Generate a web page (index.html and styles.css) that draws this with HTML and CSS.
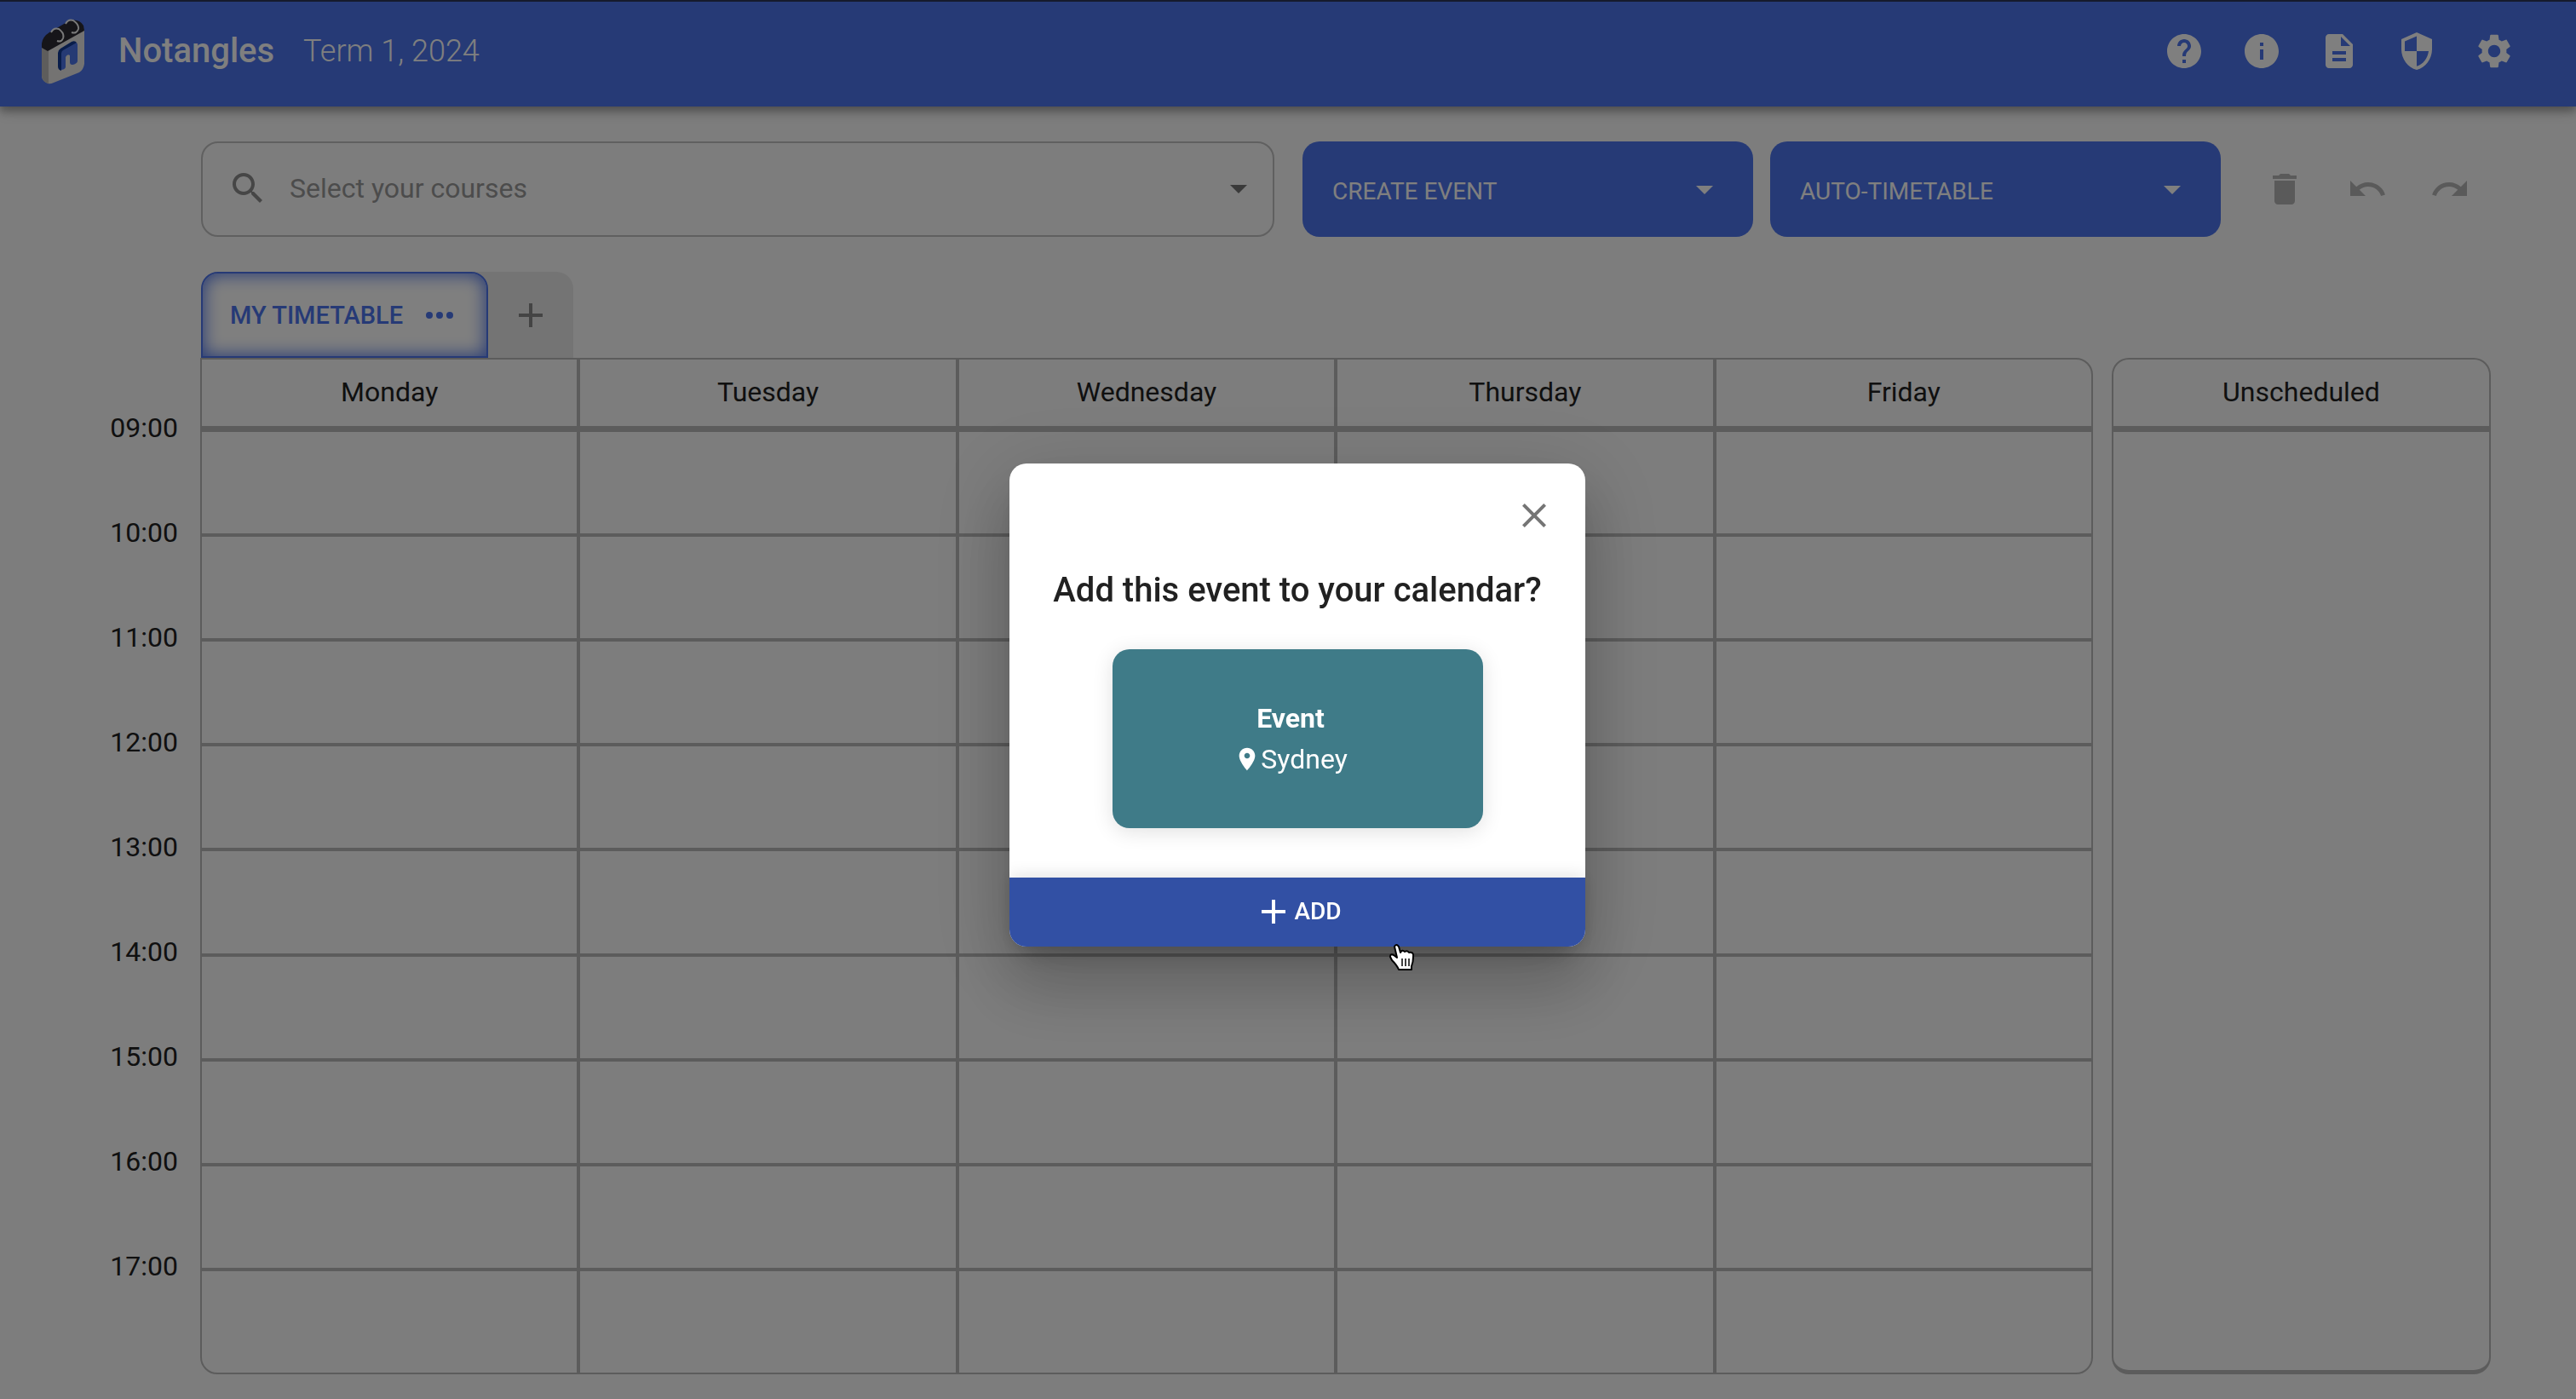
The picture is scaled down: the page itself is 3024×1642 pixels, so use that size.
FILE: index.html
```html
<!DOCTYPE html>
<html lang="en">
<head>
<meta charset="utf-8">
<title>Notangles</title>
<link rel="stylesheet" href="styles.css">
</head>
<body>
<header class="navbar">
  <a class="brand" href="#">
    <svg class="logo" viewBox="0 0 50 77" aria-hidden="true">
      <path d="M0 34 L8 37 L50 13 V53 Q49 60 44 63 L14 75 Q10 77 7 76 Q0 73 0 67Z" fill="#e8e6e4"/>
      <path d="M0 34 L8 37 V76 Q0 74 0 66Z" fill="#bdbab8"/>
      <path d="M0 34 V29 Q1 21 9 16 L33 2 Q44 0 49 8 L50 14 L7 38Z" fill="#2c2a33"/>
      <path d="M22 60 V41 Q22 38 25 36 L37 29 Q42 26 42 31 V50 Q41 53 36 54 Q33 54 33 51 V43 Q30 41 28 45 V57 Q27 60 22 60Z" fill="#4c74e8"/>
      <path d="M23 61 Q19 60 19 56 V40 Q19 37 22 35 L35 27 Q39 25 41 28 L25 37 Q23 38 23 41Z" fill="#123a94"/>
      <path d="M11 16 Q14 10 20 12 Q27 17 25 23 Q23 28 18 26 M28 6 Q31 0 37 2 Q44 7 43 12 Q41 18 35 16" fill="none" stroke="#f4f4f4" stroke-width="2"/>
    </svg>
    <span class="brand-name">Notangles</span>
  </a>
  <span class="term">Term 1, 2024</span>
  <nav class="nav-actions" aria-label="Site">
    <button class="nav-button" aria-label="Help"><svg class="icon" viewBox="0 0 24 24"><path d="M12 2C6.48 2 2 6.48 2 12s4.480 10 10 10 10-4.480 10-10S17.520 2 12 2zm1 17h-2v-2h2v2zm2.070-7.750l-.9.920C13.450 12.900 13 13.500 13 15h-2v-.5c0-1.100.450-2.100 1.170-2.830l1.240-1.260c.370-.360.590-.860.590-1.410 0-1.100-.9-2-2-2s-2 .9-2 2H8c0-2.210 1.790-4 4-4s4 1.790 4 4c0 .880-.360 1.680-.930 2.250z"/></svg></button>
    <button class="nav-button" aria-label="About"><svg class="icon" viewBox="0 0 24 24"><path d="M12 2C6.480 2 2 6.480 2 12s4.480 10 10 10 10-4.480 10-10S17.520 2 12 2zm1 15h-2v-6h2v6zm0-8h-2V7h2v2z"/></svg></button>
    <button class="nav-button" aria-label="Changelog"><svg class="icon" viewBox="0 0 24 24"><path d="M14 2H6c-1.100 0-1.990.9-1.990 2L4 20c0 1.100.890 2 1.990 2H18c1.100 0 2-.9 2-2V8l-6-6zm2 16H8v-2h8v2zm0-4H8v-2h8v2zm-3-5V3.500L18.500 9H13z"/></svg></button>
    <button class="nav-button" aria-label="Privacy"><svg class="icon" viewBox="0 0 24 24"><path d="M12 1L3 5v6c0 5.550 3.840 10.740 9 12 5.160-1.260 9-6.450 9-12V5l-9-4zm0 10.990h7c-.530 4.120-3.280 7.790-7 8.940V12H5V6.300l7-3.110v8.800z"/></svg></button>
    <button class="nav-button" aria-label="Settings"><svg class="icon" viewBox="0 0 24 24"><path d="M19.140 12.940c.040-.3.060-.610.060-.940 0-.320-.020-.640-.070-.940l2.030-1.580c.180-.140.230-.410.120-.610l-1.920-3.320c-.120-.220-.370-.290-.590-.220l-2.390.960c-.5-.380-1.030-.7-1.620-.940l-.360-2.540c-.040-.240-.240-.410-.480-.410h-3.840c-.240 0-.430.170-.470.410l-.360 2.540c-.590.240-1.130.570-1.620.940l-2.390-.960c-.220-.080-.470 0-.590.220L2.740 8.870c-.120.210-.080.470.120.610l2.030 1.580c-.050.3-.090.630-.090.940s.020.640.070.940l-2.030 1.580c-.180.140-.230.410-.120.610l1.920 3.320c.120.220.370.290.590.220l2.390-.960c.5.380 1.030.7 1.620.940l.360 2.540c.050.240.240.410.480.410h3.840c.240 0 .440-.170.470-.410l.360-2.540c.590-.240 1.130-.560 1.620-.940l2.390.960c.220.080.470 0 .590-.220l1.920-3.320c.120-.220.070-.470-.120-.610l-2.010-1.580zM12 15.600c-1.980 0-3.600-1.620-3.600-3.600s1.620-3.600 3.600-3.600 3.600 1.620 3.600 3.600-1.620 3.600-3.600 3.600z"/></svg></button>
  </nav>
</header>

<main class="page">
  <section class="toolbar" aria-label="Timetable controls">
    <div class="course-select">
      <label for="courses" aria-label="Courses"><svg class="icon" viewBox="0 0 24 24"><path d="M15.500 14h-.790l-.280-.270C15.410 12.590 16 11.110 16 9.500 16 5.910 13.090 3 9.500 3S3 5.910 3 9.500 5.910 16 9.500 16c1.610 0 3.090-.590 4.230-1.570l.270.280v.790l5 4.990L20.490 19l-4.990-5zm-6 0C7.010 14 5 11.990 5 9.500S7.010 5 9.500 5 14 7.010 14 9.500 11.990 14 9.500 14z"/></svg></label>
      <input id="courses" class="course-input" type="text" placeholder="Select your courses">
      <button class="icon-button" aria-label="Open course list"><svg class="icon" viewBox="0 0 24 24"><path d="M7 10l5 5 5-5z"/></svg></button>
    </div>
    <div class="menu-buttons">
      <button class="menu-button"><span class="menu-label">CREATE EVENT</span><svg class="icon" viewBox="0 0 24 24"><path d="M7 10l5 5 5-5z"/></svg></button>
      <button class="menu-button"><span class="menu-label">AUTO-TIMETABLE</span><svg class="icon" viewBox="0 0 24 24"><path d="M7 10l5 5 5-5z"/></svg></button>
    </div>
    <div class="history">
      <button class="history-button" aria-label="Clear timetable"><svg class="icon" viewBox="0 0 24 24"><path d="M6 19c0 1.100.9 2 2 2h8c1.100 0 2-.9 2-2V7H6v12zM19 4h-3.500l-1-1h-5l-1 1H5v2h14V4z"/></svg></button>
      <button class="history-button" aria-label="Undo"><svg class="icon" viewBox="0 0 24 24"><path d="M12.500 8c-2.650 0-5.050.990-6.900 2.600L2 7v9h9l-3.620-3.620c1.390-1.160 3.160-1.880 5.120-1.880 3.540 0 6.550 2.310 7.600 5.500l2.370-.780C21.080 11.030 17.150 8 12.500 8z"/></svg></button>
      <button class="history-button" aria-label="Redo"><svg class="icon" viewBox="0 0 24 24"><path d="M18.400 10.600C16.550 8.990 14.150 8 11.500 8c-4.650 0-8.580 3.030-9.960 7.220L3.900 16c1.050-3.190 4.050-5.500 7.600-5.500 1.950 0 3.730.720 5.120 1.880L13 16h9V7l-3.600 3.600z"/></svg></button>
    </div>
  </section>

  <div class="tabs">
    <button class="tab">MY TIMETABLE <svg class="dots" viewBox="0 0 36 10"><circle cx="5" cy="5" r="4"/><circle cx="17" cy="5" r="4"/><circle cx="29" cy="5" r="4"/></svg></button>
    <button class="tab-add" aria-label="New timetable"><svg class="icon" viewBox="0 0 24 24"><path d="M19 13h-6v6h-2v-6H5v-2h6V5h2v6h6v2z"/></svg></button>
  </div>

  <section class="timetable" aria-label="Timetable">
    <div class="hours">
      <span>09:00</span><span>10:00</span><span>11:00</span><span>12:00</span><span>13:00</span><span>14:00</span><span>15:00</span><span>16:00</span><span>17:00</span>
    </div>
    <div class="calendar">
      <div class="day">Monday</div><div class="day">Tuesday</div><div class="day">Wednesday</div><div class="day">Thursday</div><div class="day">Friday</div>
      <div class="slot"></div><div class="slot"></div><div class="slot"></div><div class="slot"></div><div class="slot"></div>
      <div class="slot"></div><div class="slot"></div><div class="slot"></div><div class="slot"></div><div class="slot"></div>
      <div class="slot"></div><div class="slot"></div><div class="slot"></div><div class="slot"></div><div class="slot"></div>
      <div class="slot"></div><div class="slot"></div><div class="slot"></div><div class="slot"></div><div class="slot"></div>
      <div class="slot"></div><div class="slot"></div><div class="slot"></div><div class="slot"></div><div class="slot"></div>
      <div class="slot"></div><div class="slot"></div><div class="slot"></div><div class="slot"></div><div class="slot"></div>
      <div class="slot"></div><div class="slot"></div><div class="slot"></div><div class="slot"></div><div class="slot"></div>
      <div class="slot"></div><div class="slot"></div><div class="slot"></div><div class="slot"></div><div class="slot"></div>
      <div class="slot"></div><div class="slot"></div><div class="slot"></div><div class="slot"></div><div class="slot"></div>
    </div>
    <div class="unscheduled">
      <div class="unscheduled-title">Unscheduled</div>
    </div>
  </section>
</main>

<div class="backdrop">
  <div class="dialog" role="dialog" aria-modal="true" aria-labelledby="dialog-title">
    <button class="dialog-close" aria-label="Close"><svg class="icon" viewBox="0 0 24 24"><path d="M19 6.410L17.590 5 12 10.590 6.410 5 5 6.410 10.590 12 5 17.590 6.410 19 12 13.410 17.590 19 19 17.590 13.410 12z"/></svg></button>
    <h2 class="dialog-title" id="dialog-title">Add this event to your calendar?</h2>
    <div class="event-card">
      <strong class="event-name">Event</strong>
      <span class="event-place"><svg class="pin" viewBox="0 0 24 24"><path d="M12 2C8.130 2 5 5.130 5 9c0 5.250 7 13 7 13s7-7.750 7-13c0-3.870-3.130-7-7-7zm0 9.500c-1.380 0-2.500-1.120-2.500-2.500s1.120-2.500 2.500-2.500 2.500 1.120 2.500 2.500-1.120 2.500-2.500 2.500z"/></svg>Sydney</span>
    </div>
    <button class="dialog-add"><svg class="icon" viewBox="0 0 24 24"><path d="M19 13h-6v6h-2v-6H5v-2h6V5h2v6h6v2z"/></svg>ADD</button>
    <svg class="pointer" viewBox="0 0 30 36" aria-hidden="true"><path d="M6 4 Q8 0 11 4 L13 11 Q15 7 18 10 Q21 8 23 11 Q29 10 28 16 Q28 22 26 27 V31 H11 Q9 26 3 20 L1 16 Q1 12 5 14 L9 17Z" fill="#fff" stroke="#000" stroke-width="2" stroke-linejoin="round"/><path d="M15 18v9M19 18v9M23 18v9" stroke="#000" stroke-width="1.500"/></svg>
  </div>
</div>
</body>
</html>
```
FILE: styles.css
```css
* { box-sizing: border-box; }

:root {
  --primary: #4c74ec;
  --line: #b9b9b9;
  --page: #fafafa;
}

body {
  margin: 0;
  min-height: 100vh;
  display: flex;
  flex-direction: column;
  background: var(--page);
  color: #212121;
  font-family: Roboto, "Liberation Sans", sans-serif;
  font-size: 32px;
  line-height: 48px;
}

button {
  margin: 0;
  padding: 0;
  border: 0;
  background: none;
  color: inherit;
  font: inherit;
  cursor: pointer;
}

.icon {
  display: block;
  width: 48px;
  height: 48px;
  fill: currentColor;
  flex: none;
}

/* Top bar */
.navbar {
  display: flex;
  align-items: center;
  height: 125px;
  padding: 0 51px 7px 49px;
  border-top: 2px solid #2c3458;
  background: var(--primary);
  color: #fff;
  box-shadow: 0 4px 8px rgba(0, 0, 0, .2), 0 8px 10px rgba(0, 0, 0, .14), 0 2px 20px rgba(0, 0, 0, .12);
}

.brand {
  display: flex;
  align-items: center;
  gap: 40px;
  color: inherit;
  text-decoration: none;
}

.logo {
  width: 50px;
  height: 77px;
}

.brand-name {
  font-size: 40px;
  font-weight: 500;
}

.term {
  margin-left: 34px;
  font-size: 36px;
  font-weight: 300;
}

.nav-actions {
  display: flex;
  margin-left: auto;
}

.nav-button {
  display: grid;
  place-items: center;
  width: 91px;
  height: 91px;
}

/* Page body */
.page {
  flex: 1;
  display: flex;
  flex-direction: column;
  padding: 41px 100px 29px;
}

.toolbar {
  display: flex;
  align-items: stretch;
  height: 112px;
  padding-left: 136px;
}

.course-select {
  flex: 1;
  display: flex;
  align-items: center;
  padding: 0 16px 2px 29px;
  border: 2px solid #c0c0c0;
  border-radius: 20px;
  color: #8c8c8c;
}

.course-input {
  flex: 1;
  min-width: 0;
  margin-left: 25px;
  padding: 0;
  border: 0;
  outline: 0;
  background: none;
  font: inherit;
}

.course-input::placeholder {
  color: #999;
  opacity: 1;
}

.icon-button { color: #757575; }

.menu-buttons {
  display: flex;
  gap: 20px;
  margin: 0 26px 0 33px;
}

.menu-button {
  display: flex;
  align-items: center;
  justify-content: space-between;
  width: 529px;
  padding: 0 33px 0 35px;
  border-radius: 20px;
  background: var(--primary);
  color: #fff;
  font-size: 28px;
}

.menu-label { padding-top: 6px; }

.history {
  display: flex;
  color: #b4b4b4;
}

.history-button {
  display: grid;
  place-items: center;
  width: 97px;
}

/* Tabs */
.tabs {
  display: flex;
  margin: 41px 0 0 136px;
}

.tab {
  z-index: 1;
  display: flex;
  align-items: center;
  gap: 26px;
  height: 101px;
  padding: 0 36px 0 32px;
  border: 2px solid var(--primary);
  border-radius: 20px 20px 0 0;
  background: #fff;
  box-shadow: inset 0 0 20px 1px var(--primary);
  color: var(--primary);
  font-size: 29px;
  font-weight: 500;
}

.dots {
  width: 36px;
  height: 10px;
  fill: currentColor;
}

.tab-add {
  display: grid;
  place-items: center;
  width: 120px;
  height: 101px;
  margin-left: -20px;
  padding-left: 20px;
  border-radius: 0 20px 0 0;
  background: #e8e8e8;
  color: #888;
}

/* Timetable */
.timetable {
  flex: 1;
  display: flex;
}

.hours {
  display: grid;
  grid-auto-rows: 1fr;
  align-items: center;
  width: 135px;
  padding: 20px 26px 65px 0;
  text-align: right;
}

.calendar {
  flex: 1;
  display: grid;
  grid-template-columns: repeat(5, 1fr);
  grid-template-rows: auto repeat(9, 1fr);
  gap: 4px;
  overflow: hidden;
  border: 2px solid var(--line);
  border-radius: 0 20px 20px 20px;
  background: var(--line);
}

.slot { background: var(--page); }

.day,
.unscheduled-title {
  padding: 14px 0 16px;
  background: var(--page);
  text-align: center;
}

.day { border-bottom: 3px solid var(--line); }

.unscheduled {
  width: 445px;
  margin-left: 22px;
  border: 2px solid var(--line);
  border-bottom-width: 5px;
  border-radius: 20px;
}

.unscheduled-title {
  border-bottom: 7px solid var(--line);
  border-radius: 20px 20px 0 0;
}

/* Dialog */
.backdrop {
  position: fixed;
  inset: 0;
  z-index: 2;
  display: grid;
  place-content: center;
  padding: 12px 0 0 22px;
  background: rgba(0, 0, 0, .5);
}

.dialog {
  position: relative;
  display: flex;
  flex-direction: column;
  align-items: center;
  border-radius: 20px;
  background: #fff;
  box-shadow: 0 22px 30px -14px rgba(0, 0, 0, .2), 0 48px 76px 6px rgba(0, 0, 0, .14), 0 18px 92px 16px rgba(0, 0, 0, .12);
}

.dialog-close {
  display: grid;
  place-items: center;
  align-self: flex-end;
  width: 80px;
  height: 80px;
  margin: 21px 20px 0 0;
  color: #757575;
}

.dialog-title {
  margin: 16px 0 37px;
  padding: 0 51px;
  font-size: 40px;
  font-weight: 500;
  line-height: 64px;
}

.event-card {
  display: flex;
  flex-direction: column;
  align-items: center;
  justify-content: center;
  width: 435px;
  height: 210px;
  padding-right: 16px;
  border-radius: 20px;
  background: #3f7b88;
  color: #fff;
  box-shadow: 0 4px 24px rgba(0, 0, 0, .12);
}

.event-name { font-weight: 700; }

.event-place {
  display: flex;
  align-items: center;
}

.pin {
  width: 32px;
  height: 32px;
  fill: currentColor;
}

.dialog-add {
  display: flex;
  align-items: center;
  justify-content: center;
  align-self: stretch;
  height: 81px;
  margin-top: 58px;
  border-radius: 0 0 20px 20px;
  background: #3250a4;
  color: #fff;
  font-size: 28px;
  font-weight: 500;
  box-shadow: 0 -2px 20px rgba(0, 0, 0, .12);
}

.pointer {
  position: absolute;
  right: 200px;
  bottom: -32px;
  width: 30px;
  height: 36px;
}
```
